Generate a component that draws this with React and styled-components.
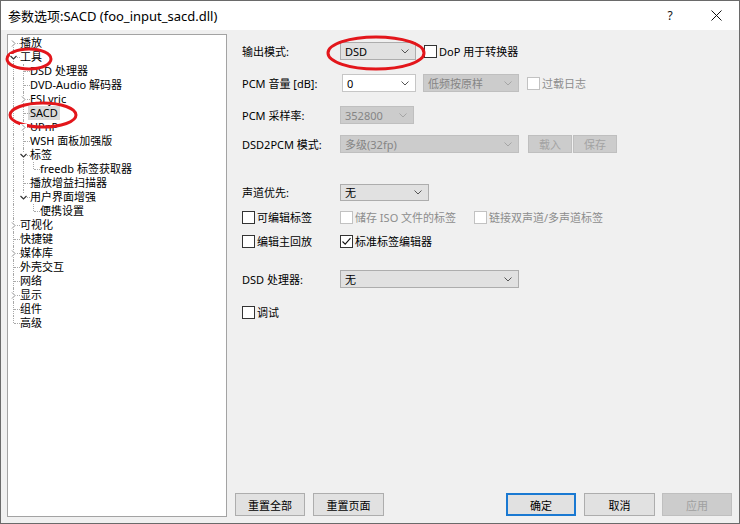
import React from "react";
import styled, { createGlobalStyle, css } from "styled-components";

const GlobalStyle = createGlobalStyle`
  html, body {
    margin: 0;
    padding: 0;
    background: #f0f0f0;
  }
  body {
    font-family: "Noto Sans", "Noto Sans CJK SC", sans-serif;
    color: #000;
  }
`;

const Window = styled.div`
  position: relative;
  width: 740px;
  height: 524px;
  box-sizing: border-box;
  border: 1px solid #6a6a6a;
  background: #f0f0f0;
  display: flex;
  flex-direction: column;
  overflow: hidden;
`;

const TitleBar = styled.div`
  height: 29px;
  flex-shrink: 0;
  background: #fff;
  display: flex;
  align-items: center;
  justify-content: space-between;
`;

const Title = styled.div`
  padding-left: 7px;
  font-size: 13px;
  color: #000;
`;

const Caption = styled.div`
  display: flex;
  height: 100%;
`;

const CaptionButton = styled.div`
  width: 46px;
  height: 100%;
  display: flex;
  align-items: center;
  justify-content: center;
  font-size: 12px;
  color: #111;
`;

const Body = styled.div`
  flex: 1;
  display: flex;
  padding: 4px 0 0 6px;
`;

/* ---- tree ---- */

const Tree = styled.div`
  width: 220px;
  height: 483px;
  box-sizing: border-box;
  border: 1px solid #a3a3a3;
  background: #fff;
  padding-top: 1px;
  flex-shrink: 0;
`;

const TreeRow = styled.div`
  height: 14px;
  display: flex;
  align-items: center;
`;

const lineColor = "#a8a8a8";

const Cell = styled.span`
  position: relative;
  width: 10px;
  height: 14px;
  flex-shrink: 0;

  &::before {
    content: "";
    position: absolute;
    left: 5px;
    border-left: 1px dotted ${lineColor};
    ${({ $kind }) =>
      $kind === "v" || $kind === "t"
        ? css`top: 0; height: 14px;`
        : $kind === "l"
        ? css`top: 0; height: 7px;`
        : $kind === "f"
        ? css`top: 7px; height: 7px;`
        : css`display: none;`}
  }

  &::after {
    content: "";
    position: absolute;
    left: 6px;
    top: 7px;
    width: 6px;
    border-top: 1px dotted ${lineColor};
    ${({ $kind }) => ($kind === "v" || $kind === " ") && css`display: none;`}
  }
`;

const Expander = styled.svg`
  position: absolute;
  left: 2px;
  top: 4px;
  width: 7px;
  height: 7px;
  background: #fff;
  z-index: 1;
`;

const NodeLabel = styled.span`
  font-size: 11px;
  line-height: 14px;
  height: 14px;
  padding: 0 2px;
  white-space: nowrap;
  background: ${({ $selected }) => ($selected ? "#d9d9d9" : "transparent")};
`;

const treeItems = [
  { gutter: "f", label: "播放", exp: "c" },
  { gutter: "t", label: "工具", exp: "e" },
  { gutter: "vt", label: "DSD 处理器" },
  { gutter: "vt", label: "DVD-Audio 解码器" },
  { gutter: "vt", label: "ESLyric", exp: "c" },
  { gutter: "vt", label: "SACD", selected: true },
  { gutter: "vt", label: "UPnP", exp: "c" },
  { gutter: "vt", label: "WSH 面板加强版" },
  { gutter: "vt", label: "标签", exp: "e" },
  { gutter: "vvl", label: "freedb 标签获取器" },
  { gutter: "vt", label: "播放增益扫描器" },
  { gutter: "vl", label: "用户界面增强", exp: "e" },
  { gutter: "v l", label: "便携设置" },
  { gutter: "t", label: "可视化", exp: "c" },
  { gutter: "t", label: "快捷键" },
  { gutter: "t", label: "媒体库", exp: "c" },
  { gutter: "t", label: "外壳交互" },
  { gutter: "t", label: "网络" },
  { gutter: "t", label: "显示", exp: "c" },
  { gutter: "t", label: "组件" },
  { gutter: "l", label: "高级" },
];

const ExpandGlyph = ({ open }) => (
  <Expander viewBox="0 0 7 7">
    {open ? (
      <path d="M0.5 2 L3.5 5 L6.5 2" fill="none" stroke="#333" strokeWidth="1.2" />
    ) : (
      <path d="M2 0.5 L5 3.5 L2 6.5" fill="none" stroke="#8a8a8a" strokeWidth="1" />
    )}
  </Expander>
);

const TreeView = () => (
  <Tree>
    {treeItems.map((item, i) => {
      const kinds = item.gutter.split("");
      return (
        <TreeRow key={i}>
          {kinds.map((k, j) => (
            <Cell key={j} $kind={k}>
              {j === kinds.length - 1 && item.exp && <ExpandGlyph open={item.exp === "e"} />}
            </Cell>
          ))}
          <NodeLabel $selected={item.selected}>{item.label}</NodeLabel>
        </TreeRow>
      );
    })}
  </Tree>
);

/* ---- settings page ---- */

const Page = styled.div`
  flex: 1;
  display: flex;
  flex-direction: column;
  padding: 0 7px 7px 8px;
`;

const Form = styled.div`
  display: flex;
  flex-direction: column;
  padding: 8px 0 0 7px;
`;

const Row = styled.div`
  display: flex;
  align-items: center;
  height: 18px;
  margin-top: ${({ $mt }) => $mt || 0}px;
  font-size: 11px;
`;

const Label = styled.span`
  width: 98px;
  flex-shrink: 0;
  white-space: nowrap;
`;

const SelectBox = styled.div`
  box-sizing: border-box;
  width: ${({ $w }) => $w}px;
  height: ${({ $h }) => $h || 18}px;
  margin-left: ${({ $ml }) => $ml || 0}px;
  padding: 0 0 0 4px;
  display: flex;
  align-items: center;
  justify-content: space-between;
  font-size: 11px;
  flex-shrink: 0;
  ${({ $variant }) =>
    $variant === "disabled"
      ? css`
          background: #cccccc;
          border: 1px solid #bfbfbf;
          color: #858585;
        `
      : $variant === "edit"
      ? css`
          background: #fff;
          border: 1px solid #c6c6c6;
          color: #000;
        `
      : css`
          background: #e1e1e1;
          border: 1px solid #adadad;
          color: #000;
        `}
`;

const Arrow = styled.svg`
  width: 8px;
  height: 5px;
  margin-right: 6px;
`;

const Select = ({ value, w, h, ml, variant }) => (
  <SelectBox $w={w} $h={h} $ml={ml} $variant={variant}>
    <span>{value}</span>
    <Arrow viewBox="0 0 8 5">
      <path
        d="M0.5 0.5 L4 4 L7.5 0.5"
        fill="none"
        stroke={variant === "disabled" ? "#a5a5a5" : "#555"}
        strokeWidth="1"
      />
    </Arrow>
  </SelectBox>
);

const Box = styled.span`
  box-sizing: border-box;
  width: 13px;
  height: 13px;
  flex-shrink: 0;
  background: #fff;
  border: 1px solid ${({ $disabled }) => ($disabled ? "#c2c2c2" : "#333")};
  display: flex;
  align-items: center;
  justify-content: center;
`;

const CheckItem = styled.label`
  display: flex;
  align-items: center;
  gap: 2px;
  width: ${({ $w }) => ($w ? `${$w}px` : "auto")};
  margin-left: ${({ $ml }) => $ml || 0}px;
  flex-shrink: 0;
  white-space: nowrap;
  color: ${({ $disabled }) => ($disabled ? "#8d8d8d" : "#000")};
`;

const Check = ({ label, checked, disabled, w, ml }) => (
  <CheckItem $w={w} $ml={ml} $disabled={disabled}>
    <Box $disabled={disabled}>
      {checked && (
        <svg width="11" height="11" viewBox="0 0 11 11">
          <path d="M1.5 5.5 L4.2 8.2 L9.5 2.2" fill="none" stroke="#111" strokeWidth="1.1" />
        </svg>
      )}
    </Box>
    <span>{label}</span>
  </CheckItem>
);

const SmallButton = styled.div`
  box-sizing: border-box;
  width: 44px;
  height: 18px;
  margin-left: ${({ $ml }) => $ml || 0}px;
  display: flex;
  align-items: center;
  justify-content: center;
  background: #cccccc;
  border: 1px solid #bfbfbf;
  color: #a3a3a3;
  font-size: 11px;
`;

const ButtonBar = styled.div`
  margin-top: auto;
  display: flex;
  align-items: center;
`;

const Button = styled.div`
  box-sizing: border-box;
  width: ${({ $w }) => $w || 71}px;
  height: 23px;
  margin-left: ${({ $ml }) => ($ml === "auto" ? "auto" : `${$ml || 0}px`)};
  display: flex;
  align-items: center;
  justify-content: center;
  font-size: 11px;
  ${({ $variant }) =>
    $variant === "default"
      ? css`
          background: #e1e1e1;
          border: 2px solid #1a79d2;
          color: #000;
        `
      : $variant === "disabled"
      ? css`
          background: #cccccc;
          border: 1px solid #bfbfbf;
          color: #a0a0a0;
        `
      : css`
          background: #e1e1e1;
          border: 1px solid #adadad;
          color: #000;
        `}
`;

/* red hand-drawn marks over the dialog */
const Marks = styled.svg`
  position: absolute;
  left: 0;
  top: 0;
  width: 740px;
  height: 524px;
  pointer-events: none;
`;

const App = () => (
  <>
    <GlobalStyle />
    <Window>
      <TitleBar>
        <Title>参数选项:SACD (foo_input_sacd.dll)</Title>
        <Caption>
          <CaptionButton>?</CaptionButton>
          <CaptionButton>
            <svg width="11" height="11" viewBox="0 0 11 11">
              <path d="M0.5 0.5 L10.5 10.5 M10.5 0.5 L0.5 10.5" stroke="#111" strokeWidth="1" />
            </svg>
          </CaptionButton>
        </Caption>
      </TitleBar>

      <Body>
        <TreeView />

        <Page>
          <Form>
            <Row>
              <Label>输出模式:</Label>
              <Select value="DSD" w={76} />
              <Check label="DoP 用于转换器" ml={8} />
            </Row>
            <Row $mt={14}>
              <Label>PCM 音量 [dB]:</Label>
              <Select value="0" w={74} ml={2} variant="edit" />
              <Select value="低频按原样" w={96} ml={7} variant="disabled" />
              <Check label="过载日志" ml={8} disabled />
            </Row>
            <Row $mt={14}>
              <Label>PCM 采样率:</Label>
              <Select value="352800" w={74} variant="disabled" />
            </Row>
            <Row $mt={11}>
              <Label>DSD2PCM 模式:</Label>
              <Select value="多级(32fp)" w={179} variant="disabled" />
              <SmallButton $ml={9}>载入</SmallButton>
              <SmallButton $ml={1}>保存</SmallButton>
            </Row>
            <Row $mt={30}>
              <Label>声道优先:</Label>
              <Select value="无" w={89} h={17} />
            </Row>
            <Row $mt={7}>
              <Check label="可编辑标签" w={98} />
              <Check label="储存 ISO 文件的标签" w={134} disabled />
              <Check label="链接双声道/多声道标签" disabled />
            </Row>
            <Row $mt={6}>
              <Check label="编辑主回放" w={98} />
              <Check label="标准标签编辑器" checked />
            </Row>
            <Row $mt={20}>
              <Label>DSD 处理器:</Label>
              <Select value="无" w={179} />
            </Row>
            <Row $mt={15}>
              <Check label="调试" />
            </Row>
          </Form>

          <ButtonBar>
            <Button $w={70}>重置全部</Button>
            <Button $w={71} $ml={8}>重置页面</Button>
            <Button $w={70} $ml="auto" $variant="default">确定</Button>
            <Button $w={71} $ml={8}>取消</Button>
            <Button $w={70} $ml={7} $variant="disabled">应用</Button>
          </ButtonBar>
        </Page>
      </Body>

      <Marks viewBox="0 0 740 524">
        <g fill="none" stroke="#e3161b" strokeWidth="3">
          <ellipse cx="28" cy="58" rx="22" ry="10" />
          <ellipse cx="42" cy="114" rx="33" ry="12" />
          <ellipse cx="375" cy="52" rx="48" ry="16" />
        </g>
      </Marks>
    </Window>
  </>
);

export default App;
